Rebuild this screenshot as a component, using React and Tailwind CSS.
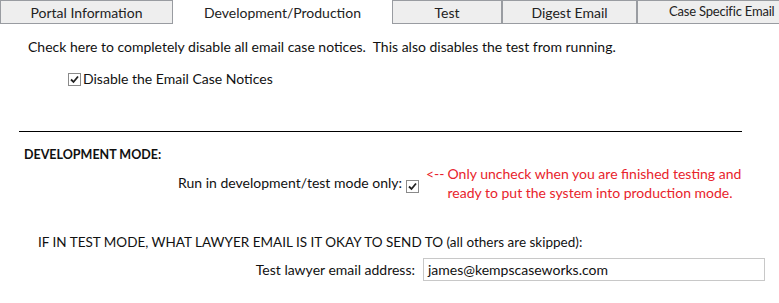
import React from "react";

function Check() {
  return (
    <span className="inline-flex items-center justify-center w-[13px] h-[13px] border border-[#8a8a8a] bg-white shrink-0">
      <svg width="9" height="9" viewBox="0 0 9 9">
        <path d="M1 4.5 L3.5 7 L8 1.5" fill="none" stroke="#222" strokeWidth="1.8" />
      </svg>
    </span>
  );
}

export default function App() {
  return (
    <div className="w-[779px] h-[303px] bg-white overflow-hidden text-[#111] font-['Lato',sans-serif]">
      <div className="flex h-[24px] text-[14px] text-[#222]">
        <div className="w-[173px] h-[24px] shrink-0 border border-[#999ca1] bg-[#eeeeee] flex items-center justify-center">Portal Information</div>
        <div className="w-[219px] h-[24px] shrink-0 flex items-center justify-center">Development/Production</div>
        <div className="w-[110px] h-[24px] shrink-0 border border-[#999ca1] bg-[#eeeeee] flex items-center justify-center">Test</div>
        <div className="w-[135px] h-[24px] shrink-0 border border-[#999ca1] bg-[#eeeeee] flex items-center justify-center">Digest Email</div>
        <div className="w-[160px] h-[24px] shrink-0 border border-[#999ca1] bg-[#eeeeee] flex items-center pl-[31px] whitespace-nowrap text-[13px] tracking-[-0.2px]">Case Specific Email</div>
      </div>
      <div className="pl-[28px] pt-[14px] text-[14px] leading-[18px]">Check here to completely disable all email case notices.&nbsp; This also disables the test from running.</div>
      <div className="pl-[68px] pt-[14px] h-[32px] flex items-center gap-[2px] text-[14px] leading-[18px]">
        <Check />
        <span>Disable the Email Case Notices</span>
      </div>
      <div className="ml-[19px] mt-[43px] w-[723px] h-px bg-black" />
      <div className="pl-[24px] pt-[15px] text-[12.5px] leading-[16px] font-bold">DEVELOPMENT MODE:</div>
      <div className="flex items-start mt-[1px] text-[14px]">
        <div className="w-[402px] text-right leading-[19px] pt-[9px]">Run in development/test mode only:</div>
        <div className="pl-[4px] pt-[11px]"><Check /></div>
        <div className="pl-[7px] flex text-[#e8232b] leading-[19px]">
          <span className="pr-[3px]">&lt;--</span>
          <div>
            <div>Only uncheck when you are finished testing and</div>
            <div>ready to put the system into production mode.</div>
          </div>
        </div>
      </div>
      <div className="pl-[38px] pt-[32px] text-[13.5px] leading-[16px]">IF IN TEST MODE, WHAT LAWYER EMAIL IS IT OKAY TO SEND TO (all others are skipped):</div>
      <div className="flex items-center mt-[8px] text-[14px]">
        <div className="w-[415px] text-right">Test lawyer email address:</div>
        <div className="ml-[8px] w-[342px] h-[23px] border border-[#c8c8c8] flex items-center pl-[4px]">james@kempscaseworks.com</div>
      </div>
    </div>
  );
}
